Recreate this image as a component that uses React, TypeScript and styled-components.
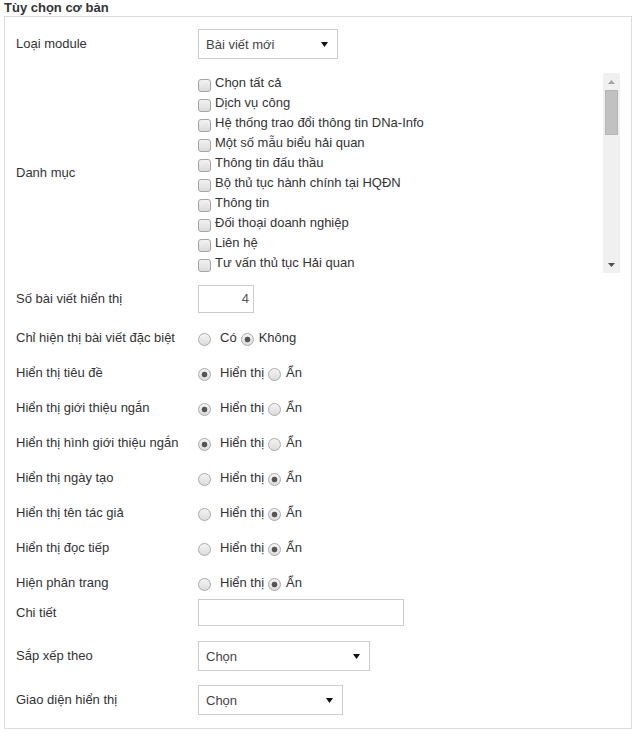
import React from "react";
import styled, { createGlobalStyle } from "styled-components";

const GlobalStyle = createGlobalStyle`
  html, body { margin: 0; padding: 0; background: #fff; }
  body {
    font-family: "Liberation Sans", Arial, sans-serif;
    font-size: 13px;
    color: #333;
  }
  * { box-sizing: border-box; }
`;

const Page = styled.div`
  padding: 0 0 0 4px;
`;

const Title = styled.div`
  font-weight: bold;
  font-size: 13px;
  line-height: 16px;
  height: 16px;
  color: #333;
`;

const Box = styled.div`
  width: 628px;
  border: 1px solid #ddd;
  padding: 0 0 13px 11px;
`;

const Row = styled.div<{ $mt: number }>`
  display: flex;
  align-items: center;
  margin-top: ${(p) => p.$mt}px;
`;

const Label = styled.div`
  width: 182px;
  flex-shrink: 0;
  line-height: 20px;
  color: #333;
`;

const SelectBox = styled.div<{ $w: number }>`
  width: ${(p) => p.$w}px;
  height: 30px;
  border: 1px solid #ccc;
  background: #fff;
  display: flex;
  align-items: center;
  justify-content: space-between;
  padding: 0 9px 0 7px;
  color: #444;
`;

const TextInput = styled.div<{ $w: number; $h: number }>`
  width: ${(p) => p.$w}px;
  height: ${(p) => p.$h}px;
  border: 1px solid #ccc;
  background: #fff;
  display: flex;
  align-items: center;
  justify-content: flex-end;
  padding: 0 4px;
  color: #555;
`;

const InputValue = styled.span`
  line-height: 16px;
`;

const ListWrap = styled.div`
  width: 422px;
  height: 200px;
  display: flex;
`;

const ListItems = styled.div`
  flex: 1;
  overflow: hidden;
  display: flex;
  flex-direction: column;
`;

const Item = styled.div`
  height: 20px;
  line-height: 20px;
  display: flex;
  align-items: center;
  gap: 4px;
  white-space: nowrap;
  color: #333;
`;

const Check = styled.span`
  width: 13px;
  height: 13px;
  flex-shrink: 0;
  margin-top: 4px;
  border: 1px solid #a4a4a4;
  border-radius: 3px;
  background: linear-gradient(#f2f2f2, #dcdcdc);
`;

const ScrollTrack = styled.div`
  width: 17px;
  flex-shrink: 0;
  background: #f0f0f0;
  display: flex;
  flex-direction: column;
`;

const ArrowBtn = styled.div`
  height: 17px;
  display: flex;
  align-items: center;
  justify-content: center;
`;

const Thumb = styled.div`
  height: 45px;
  margin: 0 2px;
  background: #c1c1c1;
  border: 1px solid #b5b5b5;
`;

const Spacer = styled.div`
  flex: 1;
`;

const RadioGroup = styled.div`
  display: flex;
  align-items: center;
  line-height: 20px;
  height: 20px;
`;

const Option = styled.label<{ $gap: number; $ml: number }>`
  display: flex;
  align-items: center;
  gap: ${(p) => p.$gap}px;
  margin-left: ${(p) => p.$ml}px;
  color: #333;
`;

const Radio = styled.span<{ $on?: boolean }>`
  width: 13px;
  height: 13px;
  flex-shrink: 0;
  margin-top: 3px;
  border-radius: 50%;
  border: 1px solid #aaa;
  background: ${(p) =>
    p.$on
      ? "radial-gradient(circle, #555 0 2.3px, #6a6a6a 2.6px, transparent 3.2px), linear-gradient(#f4f4f4, #dcdcdc)"
      : "linear-gradient(#f4f4f4, #dcdcdc)"};
`;

const Caret = () => (
  <svg width="7" height="5" viewBox="0 0 7 5">
    <path d="M0 0 H7 L3.5 5 Z" fill="#111" />
  </svg>
);

const UpArrow = () => (
  <svg width="7" height="4" viewBox="0 0 7 4">
    <path d="M0 4 H7 L3.5 0 Z" fill="#a3a3a3" />
  </svg>
);

const DownArrow = () => (
  <svg width="7" height="4" viewBox="0 0 7 4">
    <path d="M0 0 H7 L3.5 4 Z" fill="#505050" />
  </svg>
);

const categories = [
  "Chọn tất cả",
  "Dịch vụ công",
  "Hệ thống trao đổi thông tin DNa-Info",
  "Một số mẫu biểu hải quan",
  "Thông tin đấu thầu",
  "Bộ thủ tục hành chính tại HQĐN",
  "Thông tin",
  "Đối thoại doanh nghiệp",
  "Liên hệ",
  "Tư vấn thủ tục Hải quan",
];

const Select = ({ w, text }: { w: number; text: string }) => (
  <SelectBox $w={w}>
    <span>{text}</span>
    <Caret />
  </SelectBox>
);

const RadioPair = ({
  a,
  b,
  first,
}: {
  a: string;
  b: string;
  first: boolean;
}) => (
  <RadioGroup>
    <Option $gap={9} $ml={0}>
      <Radio $on={first} />
      <span>{a}</span>
    </Option>
    <Option $gap={5} $ml={4}>
      <Radio $on={!first} />
      <span>{b}</span>
    </Option>
  </RadioGroup>
);

const radioRows: { label: string; first: boolean }[] = [
  { label: "Hiển thị tiêu đề", first: true },
  { label: "Hiển thị giới thiệu ngắn", first: true },
  { label: "Hiển thị hình giới thiệu ngắn", first: true },
  { label: "Hiển thị ngày tạo", first: false },
  { label: "Hiển thị tên tác giả", first: false },
  { label: "Hiển thị đọc tiếp", first: false },
  { label: "Hiện phân trang", first: false },
];

export default function App() {
  return (
    <Page>
      <GlobalStyle />
      <Title>Tùy chọn cơ bản</Title>
      <Box>
        <Row $mt={12}>
          <Label>Loại module</Label>
          <Select w={140} text="Bài viết mới" />
        </Row>
        <Row $mt={14}>
          <Label>Danh mục</Label>
          <ListWrap>
            <ListItems>
              {categories.map((c) => (
                <Item key={c}>
                  <Check />
                  <span>{c}</span>
                </Item>
              ))}
            </ListItems>
            <ScrollTrack>
              <ArrowBtn>
                <UpArrow />
              </ArrowBtn>
              <Thumb />
              <Spacer />
              <ArrowBtn>
                <DownArrow />
              </ArrowBtn>
            </ScrollTrack>
          </ListWrap>
        </Row>
        <Row $mt={12}>
          <Label>Số bài viết hiển thị</Label>
          <TextInput $w={56} $h={28}>
            <InputValue>4</InputValue>
          </TextInput>
        </Row>
        <Row $mt={15}>
          <Label>Chỉ hiện thị bài viết đặc biệt</Label>
          <RadioPair a="Có" b="Không" first={false} />
        </Row>
        {radioRows.map((r) => (
          <Row $mt={15} key={r.label}>
            <Label>{r.label}</Label>
            <RadioPair a="Hiển thị" b="Ẩn" first={r.first} />
          </Row>
        ))}
        <Row $mt={6}>
          <Label>Chi tiết</Label>
          <TextInput $w={206} $h={27} />
        </Row>
        <Row $mt={15}>
          <Label>Sắp xếp theo</Label>
          <Select w={172} text="Chọn" />
        </Row>
        <Row $mt={14}>
          <Label>Giao diện hiển thị</Label>
          <Select w={145} text="Chọn" />
        </Row>
      </Box>
    </Page>
  );
}
